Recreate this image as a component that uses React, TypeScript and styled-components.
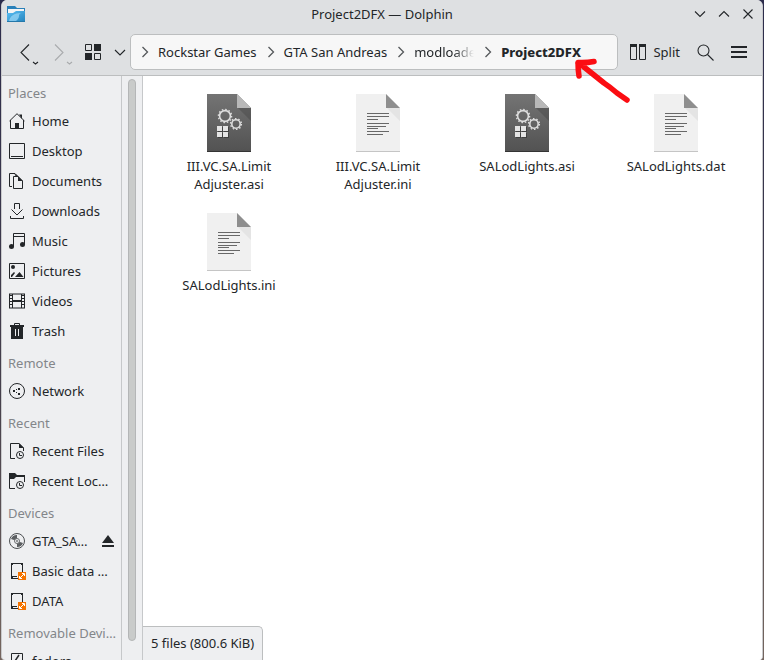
import React from "react";
import styled, { createGlobalStyle } from "styled-components";

const ink = "#232629";
const line = "#bcbebf";

const GlobalStyle = createGlobalStyle`
  * { box-sizing: border-box; }
  body {
    margin: 0;
    background: linear-gradient(#2c2c4c, #46404c 60%, #75665f);
    font-family: "Noto Sans", sans-serif;
    font-size: 13px;
    line-height: 18px;
    color: ${ink};
  }
  button { font: inherit; color: inherit; background: none; border: 0; padding: 0; margin: 0; }
  svg { display: block; flex: none; overflow: visible; }
`;

const Window = styled.div`
  position: relative;
  display: flex;
  flex-direction: column;
  height: 100vh;
  margin: 0 1px;
  border: solid #c9cacc;
  border-width: 0 1px;
  border-radius: 6px 6px 4px 4px;
  background: #eeeff1;
  overflow: hidden;
`;

const TitleBar = styled.header`
  display: grid;
  grid-template-columns: 1fr auto 1fr;
  align-items: center;
  height: 28px;
  padding: 0 8px 0 5px;
  background: #dee0e2;
`;

const Title = styled.h1`
  margin: 0;
  padding-left: 3px;
  font-size: 13px;
  font-weight: 400;
`;

const WindowButtons = styled.div`
  display: flex;
  justify-content: flex-end;
  gap: 12px;
`;

const Toolbar = styled.nav`
  display: flex;
  align-items: center;
  height: 48px;
  padding: 6px 15px 5px 15px;
  background: #dee0e2;
  border-bottom: 1px solid ${line};
`;

const ToolButton = styled.button<{ $gap: number }>`
  display: flex;
  align-items: center;
  gap: 7px;
  flex: none;
  margin-right: ${(p) => p.$gap}px;
`;

const LocationBar = styled.div`
  display: flex;
  align-items: center;
  flex: 1;
  min-width: 0;
  height: 36px;
  margin-right: 12px;
  padding-left: 10px;
  background: #f7f7f7;
  border: 1px solid ${line};
  border-radius: 5px;
`;

const Crumb = styled.div`
  display: flex;
  align-items: center;
  gap: 9px;
  margin-right: 10px;
`;

const CrumbButton = styled.button<{ $current?: boolean; $clipped?: boolean }>`
  font-weight: ${(p) => (p.$current ? 800 : 400)};
  white-space: nowrap;
  ${(p) =>
    p.$clipped &&
    `max-width: 60px; overflow: hidden; text-align: left;
     mask-image: linear-gradient(to right, #000 40px, transparent 60px);`}
`;

const Body = styled.div`
  display: flex;
  flex: 1;
  min-height: 0;
`;

const Sidebar = styled.aside`
  flex: none;
  width: 120px;
  border-right: 1px solid #c6c8ca;
  overflow: hidden;
`;

const SectionTitle = styled.h2`
  margin: 0;
  height: 30px;
  padding: 8px 0 4px 6px;
  font-size: 13px;
  font-weight: 400;
  color: #83868a;
  white-space: nowrap;
`;

const PlaceList = styled.ul`
  margin: 0;
  padding: 0;
  list-style: none;
`;

const PlaceRow = styled.li`
  display: flex;
  align-items: center;
  justify-content: space-between;
  height: 30px;
  padding: 0 7px;
`;

const PlaceButton = styled.button`
  display: flex;
  align-items: center;
  gap: 7px;
  white-space: nowrap;
`;

const ScrollTrack = styled.div`
  flex: none;
  width: 21px;
  padding: 3px 6px 19px;
  border-right: 1px solid #c6c8ca;
`;

const ScrollThumb = styled.div`
  width: 8px;
  height: 100%;
  background: #c9cbca;
  border: 1px solid #b4b6b7;
  border-radius: 4px;
`;

const Main = styled.main`
  display: flex;
  flex-direction: column;
  justify-content: space-between;
  flex: 1;
  min-width: 0;
  background: #fff;
`;

const FileGrid = styled.div`
  display: grid;
  grid-template-columns: repeat(auto-fill, 148px);
  grid-auto-rows: 119px;
  column-gap: 1px;
  padding: 18px 0 0 12px;
`;

const FileButton = styled.button`
  display: flex;
  flex-direction: column;
  align-items: center;
  align-self: start;
  gap: 5px;
`;

const FileName = styled.span`
  max-width: 104px;
  text-align: center;
`;

const Status = styled.footer`
  align-self: flex-start;
  height: 34px;
  padding: 7px 8px 0;
  background: #eeeff1;
  border: 1px solid ${line};
  border-width: 1px 1px 0 0;
  border-radius: 0 5px 0 0;
`;

const Annotation = styled.svg`
  position: absolute;
  left: 568px;
  top: 56px;
  pointer-events: none;
`;

const DolphinIcon = () => (
  <svg width="18" height="18" viewBox="0 0 18 18">
    <defs>
      <linearGradient id="folder" x1="0" y1="0" x2="1" y2="1">
        <stop offset="0" stopColor="#5cc0f5" />
        <stop offset="1" stopColor="#2484bd" />
      </linearGradient>
    </defs>
    <path d="M0 1h8l2 2h8v6H0z" fill="#2980b9" />
    <path d="M1 4h16v5H1z" fill="#f4f5f6" />
    <path d="M0 8h6l3-2h9v11H0z" fill="url(#folder)" />
    <path d="M2 16c1-5 5-8 12-8-2 1-2 2-2 3 0 2-1 3-3 5z" fill="#9ad6f6" opacity=".75" />
    <path d="M0 16h18v1H0z" fill="#2478aa" />
  </svg>
);

const WinIcon = ({ d }: { d: string }) => (
  <svg width="12" height="12" viewBox="0 0 12 12" fill="none" stroke={ink} strokeWidth="1.1">
    <path d={d} />
  </svg>
);

const NavIcon = ({ d, color }: { d: string; color: string }) => (
  <svg width="24" height="26" viewBox="0 0 24 26" fill="none" stroke={color} strokeWidth="1.1">
    <path d={d} />
    <path d="M16 23l2.500 2 2.500-2" />
  </svg>
);

const CrumbArrow = () => (
  <svg width="8" height="12" viewBox="0 0 8 12" fill="none" stroke="#55585b" strokeWidth="1.300">
    <path d="M1.500 1l5 5-5 5" />
  </svg>
);

const Icon = ({ children }: { children: React.ReactNode }) => (
  <svg width="16" height="16" viewBox="0 0 16 16" fill="none" stroke={ink}>
    {children}
  </svg>
);

const solid = { fill: ink, stroke: "none" };

const Clock = () => (
  <>
    <circle cx="11" cy="12" r="3.500" />
    <path d="M10.500 10v2.500H13" />
  </>
);

const Drive = () => (
  <Icon>
    <path d="M2.500.500h11v15h-11z" />
    <path d="M4 13.500h4" />
    <path d="M2 0h2v2H2zM12 0h2v2h-2zM2 13h2v3H2z" {...solid} />
    <path d="M9 9h8v8H9z" fill="#f67400" stroke="none" />
    <path d="M11 15l4-4M10.500 13v2.500H13M13 10.500h2.500V13" stroke="#fff" />
  </Icon>
);

const icons: Record<string, React.ReactNode> = {
  home: (
    <Icon>
      <path d="M.5 8L8 .7 15.500 8M1.500 7v8.500h13V7" />
      <path d="M6 10h4v6H6zM10 1.500h3V6z" {...solid} />
    </Icon>
  ),
  desktop: (
    <Icon>
      <path d="M.5.5h15v15H.5zM2 13.500h12" />
    </Icon>
  ),
  documents: (
    <Icon>
      <path d="M3 13.500H.5V.5H6l3 3M4.500 3.500H9l4.500 4.500v7.500h-9z" />
      <path d="M5 0l5 4H7zM9 3l5 5H9z" {...solid} />
    </Icon>
  ),
  downloads: (
    <Icon>
      <path d="M5.500 6V.5h5V6M2.500 6.500L8 12l5.500-5.500M1.500 13v2.500h13V13" />
    </Icon>
  ),
  music: (
    <Icon>
      <path d="M4.500 13V.5h11V11M4.500 3.500h11" />
      <circle cx="2.500" cy="13.500" r="2.500" {...solid} />
      <circle cx="13.500" cy="11.500" r="2.500" {...solid} />
    </Icon>
  ),
  pictures: (
    <Icon>
      <path d="M.5.5h15v15H.5z" />
      <circle cx="4" cy="4" r="2" {...solid} />
      <path d="M2 14v-2l3-3 1 1-3 4zM6 14l4.500-5 4 5z" {...solid} />
    </Icon>
  ),
  videos: (
    <Icon>
      <path d="M0 0h16v2H0zM0 14h16v2H0z" fill="#85878a" stroke="none" />
      <path d="M3 1h1v14H3zM12 1h1v14h-1zM3 7h10v2H3zM0 1h1v14H0zM15 1h1v14h-1z" {...solid} />
      <path d="M2 2v12M14 2v12" strokeWidth="2" strokeDasharray="1 2" />
    </Icon>
  ),
  trash: (
    <Icon>
      <path d="M5.500 3V.5h5V3" />
      <path d="M1 2h14v2h-1v12H2V4H1z" {...solid} />
      <path d="M6.500 6v7M9.500 6v7" stroke="#eeeff1" />
    </Icon>
  ),
  network: (
    <Icon>
      <circle cx="8" cy="8" r="7.500" />
      <path d="M4 7h2v2H4zM9 5h2v2H9zM9 10h2v2H9zM7 6h1v1H7zM7 9h1v1H7z" {...solid} />
    </Icon>
  ),
  recentFiles: (
    <Icon>
      <path d="M6 15.500H1.500V.5h8.500l4.500 4.500V8" />
      <path d="M10 0l5 5h-5z" {...solid} />
      <Clock />
    </Icon>
  ),
  recentLocations: (
    <Icon>
      <path d="M6 15.500H.5V4M15.500 3v6" />
      <path d="M0 0h6l2 2h8v2H7L5 6H0z" {...solid} />
      <Clock />
    </Icon>
  ),
  disc: (
    <Icon>
      <circle cx="8" cy="8" r="7.500" stroke="#4c4f52" />
      <path d="M8 8L2 6A6.200 6.200 0 0 1 8 2zM8 8l6 2A6.200 6.200 0 0 1 8 14z" fill="#5c5f62" stroke="none" />
      <circle cx="8" cy="8" r="2.500" fill="#eeeff1" stroke="#6b6e70" />
      <circle cx="8" cy="8" r=".8" {...solid} />
    </Icon>
  ),
  drive: <Drive />,
  usb: (
    <Icon>
      <path d="M2.500.500h11V16h-11z" />
      <path d="M10 2L6 8h3l-3 6" strokeWidth="1.500" />
    </Icon>
  ),
};

const Gear = ({ cx, cy, r, teeth }: { cx: number; cy: number; r: number; teeth: number }) => {
  const step = (2 * Math.PI * (r + 1.2)) / teeth;
  return (
    <g fill="none" stroke="#dedede">
      <circle cx={cx} cy={cy} r={r} strokeWidth="1.6" />
      <circle cx={cx} cy={cy} r={r + 1.2} strokeWidth="1.4" strokeDasharray={`${step * 0.45} ${step * 0.55}`} />
    </g>
  );
};

const LibraryFileIcon = () => (
  <svg width="44" height="58" viewBox="0 0 44 58">
    <defs>
      <linearGradient id="dark" x1="0" y1="0" x2="0" y2="1">
        <stop offset="0" stopColor="#747474" />
        <stop offset="1" stopColor="#525252" />
      </linearGradient>
    </defs>
    <path d="M0 0h30l14 14v44H0z" fill="url(#dark)" />
    <path d="M31 14h13v13z" fill="#3d3d3d" opacity=".35" />
    <path d="M30 0l14 14H30z" fill="#b8b8b8" />
    <path d="M0 57h44v1H0z" fill="#343434" />
    <Gear cx={18} cy={22} r={5.4} teeth={12} />
    <Gear cx={29} cy={30} r={4.2} teeth={10} />
    <path d="M11 33h5v5h-5zM17 33h5v5h-5zM11 39h5v5h-5zM17 39h5v5h-5z" fill="#2e2e2e" opacity=".6" />
    <path d="M10 32h5v5h-5zM16 32h5v5h-5zM10 38h5v5h-5zM16 38h5v5h-5z" fill="#e4e4e4" />
  </svg>
);

const TextFileIcon = () => (
  <svg width="44" height="58" viewBox="0 0 44 58">
    <path d="M0 0h30l14 14v44H0z" fill="#f0f0f0" />
    <path d="M31 14h13v13z" fill="#dcdcdc" opacity=".6" />
    <path d="M30 0l14 14H30z" fill="#8e8e8e" />
    <path d="M0 57h44v1H0z" fill="#c5c5c5" />
    <path
      d="M11 19.500h22M11 22.500h22M11 25.500h11M11 29.500h22M11 32.500h19M11 34.500h11M11 37.500h22M11 40.500h16"
      stroke="#686868"
    />
  </svg>
);

const sections = [
  {
    title: "Places",
    items: [
      ["home", "Home"],
      ["desktop", "Desktop"],
      ["documents", "Documents"],
      ["downloads", "Downloads"],
      ["music", "Music"],
      ["pictures", "Pictures"],
      ["videos", "Videos"],
      ["trash", "Trash"],
    ],
  },
  { title: "Remote", items: [["network", "Network"]] },
  {
    title: "Recent",
    items: [
      ["recentFiles", "Recent Files"],
      ["recentLocations", "Recent Loc…"],
    ],
  },
  {
    title: "Devices",
    items: [
      ["disc", "GTA_SA…"],
      ["drive", "Basic data …"],
      ["drive", "DATA"],
    ],
  },
  { title: "Removable Devi…", items: [["usb", "fedora"]] },
];

const files = [
  { name: "III.VC.SA.Limit Adjuster.asi", library: true },
  { name: "III.VC.SA.Limit Adjuster.ini", library: false },
  { name: "SALodLights.asi", library: true },
  { name: "SALodLights.dat", library: false },
  { name: "SALodLights.ini", library: false },
];

const crumbs = ["Rockstar Games", "GTA San Andreas", "modloader", "Project2DFX"];

export default function App() {
  return (
    <>
      <GlobalStyle />
      <Window>
        <TitleBar>
          <DolphinIcon />
          <Title>Project2DFX — Dolphin</Title>
          <WindowButtons>
            <button aria-label="Minimize"><WinIcon d="M1 3.500l5 5 5-5" /></button>
            <button aria-label="Maximize"><WinIcon d="M1 8.500l5-5 5 5" /></button>
            <button aria-label="Close"><WinIcon d="M1.500 1.500l9 9M10.500 1.500l-9 9" /></button>
          </WindowButtons>
        </TitleBar>
        <Toolbar>
          <ToolButton aria-label="Back" $gap={10}>
            <NavIcon color={ink} d="M12 5.500L4 13.500l8 8" />
          </ToolButton>
          <ToolButton aria-label="Forward" $gap={10} disabled>
            <NavIcon color="#a9abad" d="M4 5.500l8 8-8 8" />
          </ToolButton>
          <ToolButton aria-label="Icons view" $gap={13}>
            <svg width="16" height="16" viewBox="0 0 16 16" fill="none" stroke={ink}>
              <path d="M.5.5h6v6h-6zM9.500 9.500h6v6h-6z" />
              <path d="M9 0h7v7H9zM0 9h7v7H0z" {...solid} />
            </svg>
          </ToolButton>
          <ToolButton aria-label="View mode menu" $gap={4}>
            <svg width="12" height="8" viewBox="0 0 12 8" fill="none" stroke={ink} strokeWidth="1.100">
              <path d="M1 2l5 5 5-5" />
            </svg>
          </ToolButton>
          <LocationBar>
            {crumbs.map((name, i) => (
              <Crumb key={name}>
                <CrumbArrow />
                <CrumbButton $current={i === 3} $clipped={i === 2}>{name}</CrumbButton>
              </Crumb>
            ))}
          </LocationBar>
          <ToolButton $gap={17}>
            <svg width="16" height="16" viewBox="0 0 16 16" fill="none" stroke={ink}>
              <path d="M.5 1v14.500h6V1M9.500 1v14.500h6V1" />
              <path d="M0 0h7v3H0zM9 0h7v3H9z" {...solid} />
            </svg>
            Split
          </ToolButton>
          <ToolButton aria-label="Search" $gap={17}>
            <svg width="17" height="17" viewBox="0 0 17 17" fill="none" stroke={ink} strokeWidth="1.100">
              <circle cx="6.500" cy="6.500" r="5.500" />
              <path d="M10.500 10.500l6 6" />
            </svg>
          </ToolButton>
          <ToolButton aria-label="Menu" $gap={0}>
            <svg width="16" height="12" viewBox="0 0 16 12" fill={ink}>
              <path d="M0 0h16v2H0zM0 5h16v2H0zM0 10h16v2H0z" />
            </svg>
          </ToolButton>
        </Toolbar>
        <Body>
          <Sidebar>
            {sections.map((section) => (
              <section key={section.title}>
                <SectionTitle>{section.title}</SectionTitle>
                <PlaceList>
                  {section.items.map(([icon, label]) => (
                    <PlaceRow key={label}>
                      <PlaceButton>
                        {icons[icon]}
                        {label}
                      </PlaceButton>
                      {icon === "disc" && (
                        <button aria-label="Eject">
                          <svg width="12" height="12" viewBox="0 0 12 12" fill={ink}>
                            <path d="M6 0l6 8H0zM0 10h12v2H0z" />
                          </svg>
                        </button>
                      )}
                    </PlaceRow>
                  ))}
                </PlaceList>
              </section>
            ))}
          </Sidebar>
          <ScrollTrack>
            <ScrollThumb />
          </ScrollTrack>
          <Main>
            <FileGrid>
              {files.map((file) => (
                <FileButton key={file.name}>
                  {file.library ? <LibraryFileIcon /> : <TextFileIcon />}
                  <FileName>{file.name}</FileName>
                </FileButton>
              ))}
            </FileGrid>
            <Status>5 files (800.6 KiB)</Status>
          </Main>
        </Body>
        <Annotation width="64" height="52" viewBox="0 0 64 52" fill="none" stroke="#fb0d12" strokeWidth="5.5" strokeLinecap="round" strokeLinejoin="round">
          <path d="M57 44L47 37Q40 31 34 27L14 11L8 7M24 5.500Q16 7 8 6.500Q8 14 9 20" />
        </Annotation>
      </Window>
    </>
  );
}
